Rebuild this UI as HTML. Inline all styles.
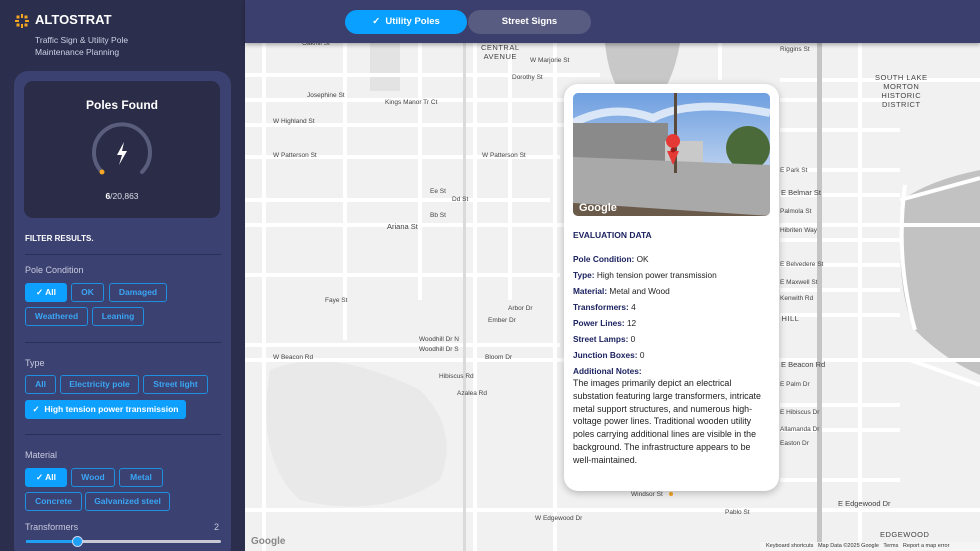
<!DOCTYPE html>
<html><head><meta charset="utf-8"><style>
*{box-sizing:border-box;margin:0;padding:0}
html,body{width:980px;height:551px;overflow:hidden}
body{font-family:"Liberation Sans",sans-serif;background:#f1f1f1;position:relative}
#side{position:absolute;left:0;top:0;width:245px;height:551px;background:#2b2e4c;overflow:hidden}
#top{position:absolute;left:245px;top:0;width:735px;height:43px;background:#3b3f6e;box-shadow:0 2px 4px rgba(0,0,0,.3)}
.tab{position:absolute;top:10px;height:24px;border-radius:12px;color:#fff;font-size:9.5px;font-weight:bold;text-align:center;line-height:24px}
#map{position:absolute;left:245px;top:43px;width:735px;height:508px;overflow:hidden}
.panel{position:absolute;left:14px;top:71px;width:217px;height:490px;background:#3b4170;border-radius:14px}
.card{position:absolute;left:10px;top:10px;width:196px;height:137px;background:#2a2c48;border-radius:9px}
.lbl{color:#c9cbe0;font-size:9px;position:absolute;left:11px}
.chip{position:absolute;height:19px;border:1px solid #1f8fe0;border-radius:3px;color:#3aa6f5;font-size:8.5px;line-height:17px;text-align:center;font-weight:bold}
.chip.on{background:#0ea0ff;color:#fff;border-color:#0ea0ff}
.hr{position:absolute;left:11px;width:196px;height:1px;background:#2b2f55}
.m{position:absolute;font-size:6.5px;color:#444;white-space:nowrap}
.pop{position:absolute;left:564px;top:84px;width:215px;height:407px;background:#fff;border-radius:14px;box-shadow:0 2px 8px rgba(0,0,0,.25)}
.pop p{font-size:8.3px;color:#222;line-height:16px}
.pop b{color:#1c2260}
</style></head><body>
<div id="side">
 <svg style="position:absolute;left:15px;top:14px" width="14" height="14" viewBox="0 0 14 14"><g fill="#f5a623"><rect x="6" y="0" width="2" height="4"/><rect x="6" y="10" width="2" height="4"/><rect x="0" y="6" width="4" height="2"/><rect x="10" y="6" width="4" height="2"/><rect x="1.5" y="1.5" width="3" height="3"/><rect x="9.5" y="1.5" width="3" height="3"/><rect x="1.5" y="9.5" width="3" height="3"/><rect x="9.5" y="9.5" width="3" height="3"/></g></svg>
 <div style="position:absolute;left:35px;top:12px;color:#fff;font-weight:bold;font-size:13px">ALTOSTRAT</div>
 <div style="position:absolute;left:35px;top:35px;color:#cfd1e6;font-size:8.5px;line-height:11.5px">Traffic Sign &amp; Utility Pole<br>Maintenance Planning</div>
 <div class="panel">
  <div class="card">
   <div style="position:absolute;top:17px;width:100%;text-align:center;color:#fff;font-weight:bold;font-size:12px">Poles Found</div>
   <svg style="position:absolute;left:66px;top:40px" width="64" height="64" viewBox="0 0 64 64"><path d="M12 51 A28 28 0 1 1 52 51" fill="none" stroke="#5a5d7c" stroke-width="4" stroke-linecap="round"/><circle cx="12" cy="51" r="2.5" fill="#f5a623"/><path d="M34 21 L27 34 H32 L29 44 L37 30 H32 Z" fill="#fff"/></svg>
   <div style="position:absolute;top:110px;width:100%;text-align:center;color:#dcdde8;font-size:8.5px"><b style="color:#fff">6</b>/20,863</div>
  </div>
  <div style="position:absolute;left:11px;top:163px;color:#fff;font-weight:bold;font-size:8px">FILTER RESULTS.</div>
  <div class="hr" style="top:183px"></div>
  <div class="lbl" style="top:194px">Pole Condition</div>
  <div class="chip on" style="left:11px;top:212px;width:42px">✓ All</div>
  <div class="chip" style="left:57px;top:212px;width:33px">OK</div>
  <div class="chip" style="left:95px;top:212px;width:58px">Damaged</div>
  <div class="chip" style="left:11px;top:236px;width:63px">Weathered</div>
  <div class="chip" style="left:78px;top:236px;width:52px">Leaning</div>
  <div class="hr" style="top:271px"></div>
  <div class="lbl" style="top:287px">Type</div>
  <div class="chip" style="left:11px;top:304px;width:31px">All</div>
  <div class="chip" style="left:46px;top:304px;width:79px">Electricity pole</div>
  <div class="chip" style="left:129px;top:304px;width:65px">Street light</div>
  <div class="chip on" style="left:11px;top:329px;width:161px">✓&nbsp; High tension power transmission</div>
  <div class="hr" style="top:363px"></div>
  <div class="lbl" style="top:379px">Material</div>
  <div class="chip on" style="left:11px;top:397px;width:42px">✓ All</div>
  <div class="chip" style="left:57px;top:397px;width:44px">Wood</div>
  <div class="chip" style="left:105px;top:397px;width:44px">Metal</div>
  <div class="chip" style="left:11px;top:421px;width:57px">Concrete</div>
  <div class="chip" style="left:71px;top:421px;width:85px">Galvanized steel</div>
  <div class="lbl" style="top:451px">Transformers</div>
  <div class="lbl" style="top:451px;left:200px">2</div>
  <div style="position:absolute;left:12px;top:469px;width:195px;height:3px;background:#c8c9d4;border-radius:2px"></div>
  <div style="position:absolute;left:12px;top:469px;width:52px;height:3px;background:#1ea0f5"></div>
  <div style="position:absolute;left:58px;top:465px;width:11px;height:11px;border-radius:50%;background:#1ea0f5;border:1.5px solid #cfd8f0"></div>
 </div>
</div>
<div id="map">
<svg width="735" height="508" viewBox="245 43 735 508" style="position:absolute;left:0;top:0">
<rect x="245" y="43" width="735" height="508" fill="#f1f1f1"/>
<path d="M605 43 Q610 95 640 110 Q670 100 680 43 Z" fill="#c8c8c8"/>
<path d="M902 200 Q930 180 980 170 V375 Q945 360 915 330 Q895 290 902 200Z" fill="#c2c2c2"/>
<rect x="370" y="43" width="30" height="48" fill="#e3e3e3"/>
<path d="M270 370 Q330 345 420 390 Q460 430 440 480 Q380 520 300 500 Q255 460 270 370Z" fill="#e9e9e9"/>
<g stroke="#fff" stroke-width="4" fill="none">
<path d="M245 75H600M245 100H600M245 125H600M245 157H560M245 200H550M245 225H980M245 275H560M245 345H560M245 360H980M245 510H980"/>
<path d="M264 43V551M345 43V340M420 43V300M475 43V551M510 43V300M555 43V551M720 43V80M820 43V551M860 43V551"/>
<path d="M780 80H980M780 100H900M780 130H900M780 170H900M780 195H900M780 240H900M780 265H900M780 290H900M780 315H900M780 405H900M780 430H900M780 480H900"/>
<path d="M910 360L980 385M900 200L980 178M905 185Q895 260 915 330"/>
</g>
<rect x="817" y="43" width="5" height="508" fill="#c5c5c5"/>
<rect x="463" y="43" width="3" height="508" fill="#dadada"/>
</svg>
<div class="m" style="left:57px;top:-3px">Oakhill St</div>
<div class="m" style="left:236px;top:0px;font-size:7.5px;text-align:center;letter-spacing:.5px">CENTRAL<br>AVENUE</div>
<div class="m" style="left:285px;top:14px">W Marjorie St</div>
<div class="m" style="left:267px;top:31px">Dorothy St</div>
<div class="m" style="left:62px;top:49px">Josephine St</div>
<div class="m" style="left:140px;top:56px">Kings Manor Tr Ct</div>
<div class="m" style="left:28px;top:75px">W Highland St</div>
<div class="m" style="left:28px;top:109px">W Patterson St</div>
<div class="m" style="left:237px;top:109px">W Patterson St</div>
<div class="m" style="left:185px;top:145px">Ee St</div>
<div class="m" style="left:207px;top:153px">Dd St</div>
<div class="m" style="left:185px;top:169px">Bb St</div>
<div class="m" style="left:142px;top:179px;font-size:7.5px">Ariana St</div>
<div class="m" style="left:80px;top:254px">Faye St</div>
<div class="m" style="left:263px;top:262px">Arbor Dr</div>
<div class="m" style="left:243px;top:274px">Ember Dr</div>
<div class="m" style="left:174px;top:293px">Woodhill Dr N</div>
<div class="m" style="left:174px;top:303px">Woodhill Dr S</div>
<div class="m" style="left:28px;top:311px">W Beacon Rd</div>
<div class="m" style="left:240px;top:311px">Bloom Dr</div>
<div class="m" style="left:194px;top:330px">Hibiscus Rd</div>
<div class="m" style="left:212px;top:347px">Azalea Rd</div>
<div class="m" style="left:386px;top:448px">Windsor St</div>
<div class="m" style="left:290px;top:472px">W Edgewood Dr</div>
<div class="m" style="left:480px;top:466px">Pablo St</div>
<div class="m" style="left:535px;top:3px">Riggins St</div>
<div class="m" style="left:630px;top:30px;font-size:7.5px;text-align:center;line-height:9px;letter-spacing:.5px">SOUTH LAKE<br>MORTON<br>HISTORIC<br>DISTRICT</div>
<div class="m" style="left:535px;top:124px">E Park St</div>
<div class="m" style="left:536px;top:145px;font-size:7.5px">E Belmar St</div>
<div class="m" style="left:535px;top:165px">Palmola St</div>
<div class="m" style="left:535px;top:184px">Hibriten Way</div>
<div class="m" style="left:535px;top:218px">E Belvedere St</div>
<div class="m" style="left:535px;top:236px">E Maxwell St</div>
<div class="m" style="left:535px;top:252px">Kenwith Rd</div>
<div class="m" style="left:536px;top:317px;font-size:7.5px">E Beacon Rd</div>
<div class="m" style="left:535px;top:338px">E Palm Dr</div>
<div class="m" style="left:535px;top:366px">E Hibiscus Dr</div>
<div class="m" style="left:535px;top:383px">Allamanda Dr</div>
<div class="m" style="left:535px;top:397px">Easton Dr</div>
<div class="m" style="left:593px;top:456px;font-size:7.5px">E Edgewood Dr</div>
<div class="m" style="left:635px;top:487px;font-size:7.5px;letter-spacing:.5px">EDGEWOOD</div>
<div class="m" style="left:528px;top:271px;font-size:7.5px;letter-spacing:.5px">N HILL</div>
<div style="position:absolute;left:6px;top:493px;font-size:10px;color:#888;font-weight:bold">Google</div>
<div style="position:absolute;left:515px;top:499px;width:220px;height:9px;background:rgba(245,245,245,.9);font-size:5.5px;color:#333;line-height:9px;padding-left:6px">Keyboard shortcuts &nbsp; Map Data ©2025 Google &nbsp; Terms &nbsp; Report a map error</div>
<div style="position:absolute;left:424px;top:449px;width:4px;height:4px;border-radius:50%;background:#f5a623"></div>
</div>
<div id="top">
 <div class="tab" style="left:100px;width:122px;background:#0aa0ff">✓&nbsp; Utility Poles</div>
 <div class="tab" style="left:223px;width:123px;background:#585c80">Street Signs</div>
</div>
<div class="pop">
 <svg style="position:absolute;left:9px;top:9px;border-radius:5px" width="197" height="123" viewBox="0 0 197 123">
  <defs><linearGradient id="sk" x1="0" y1="0" x2="0" y2="1"><stop offset="0" stop-color="#6e9fe0"/><stop offset="1" stop-color="#e8eef8"/></linearGradient></defs>
  <rect width="197" height="123" fill="url(#sk)"/>
  <path d="M0 30 Q40 10 80 25 Q120 5 197 20" stroke="#fff" stroke-width="8" fill="none" opacity=".7"/>
  <rect x="0" y="30" width="95" height="50" fill="#8a8a8a"/>
  <rect x="92" y="48" width="38" height="30" fill="#c9c9c9"/>
  <circle cx="175" cy="55" r="22" fill="#4b6a3a"/>
  <path d="M0 64 L197 72 V123 H0Z" fill="#a9a9a9"/>
  <path d="M0 110 L197 123 H0Z" fill="#6a5a4a"/>
  <rect x="101" y="0" width="3" height="80" fill="#5a4a3a"/>
  <path d="M100 55 a7 7 0 1 1 0.1 0 Z" fill="#e53935"/><path d="M94 58 L100 72 L106 58Z" fill="#e53935"/>
  <circle cx="100" cy="57" r="2.5" fill="#a01818"/>
  <text x="6" y="118" fill="#fff" font-size="11" font-family="Liberation Sans" font-weight="bold">Google</text>
 </svg>
 <div style="position:absolute;left:9px;top:146px;font-weight:bold;font-size:8.5px;color:#1c2260">EVALUATION DATA</div>
 <div style="position:absolute;left:9px;top:167px;width:197px">
  <p><b>Pole Condition:</b> OK</p>
  <p><b>Type:</b> High tension power transmission</p>
  <p><b>Material:</b> Metal and Wood</p>
  <p><b>Transformers:</b> 4</p>
  <p><b>Power Lines:</b> 12</p>
  <p><b>Street Lamps:</b> 0</p>
  <p><b>Junction Boxes:</b> 0</p>
  <p><b>Additional Notes:</b></p>
  <p style="line-height:12.8px;margin-top:-2px;font-size:8.9px">The images primarily depict an electrical substation featuring large transformers, intricate metal support structures, and numerous high-voltage power lines. Traditional wooden utility poles carrying additional lines are visible in the background. The infrastructure appears to be well-maintained.</p>
 </div>
</div>
</body></html>
